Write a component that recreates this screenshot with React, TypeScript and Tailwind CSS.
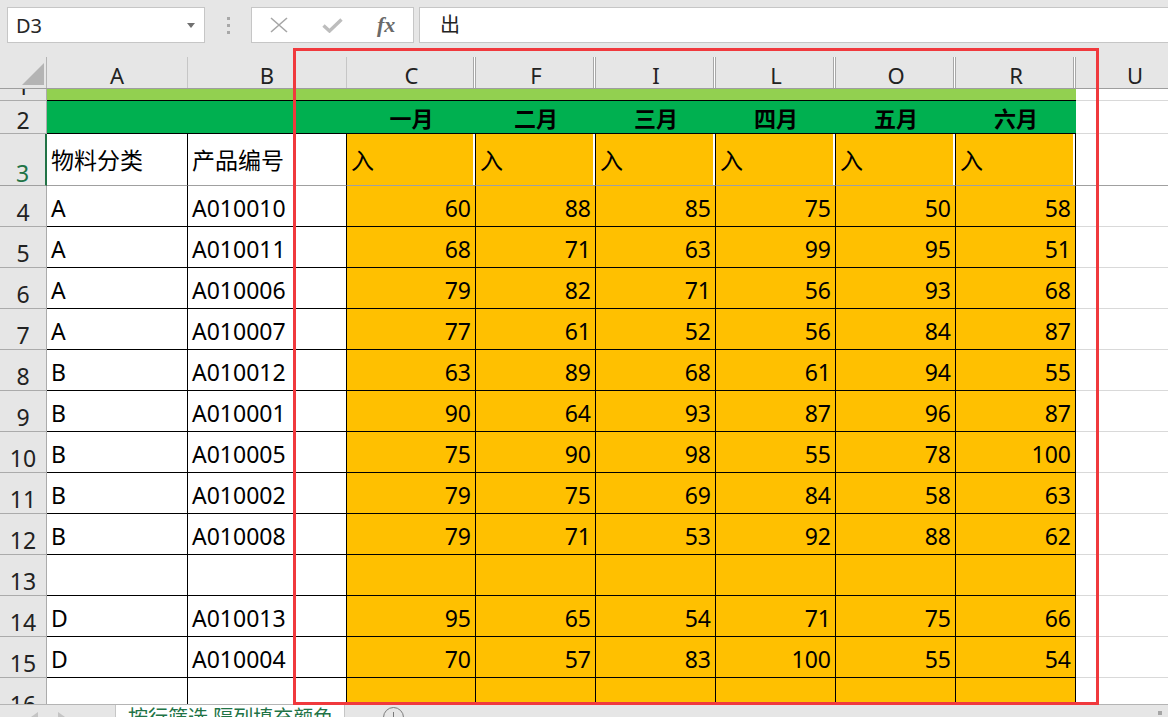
import clsx from 'clsx';

type DataRow = { n: number; a: string; b: string; v: number[] };

const monthCols = ['C', 'F', 'I', 'L', 'O', 'R'];
const months = ['一月', '二月', '三月', '四月', '五月', '六月'];

const data: DataRow[] = [
  { n: 4, a: 'A', b: 'A010010', v: [60, 88, 85, 75, 50, 58] },
  { n: 5, a: 'A', b: 'A010011', v: [68, 71, 63, 99, 95, 51] },
  { n: 6, a: 'A', b: 'A010006', v: [79, 82, 71, 56, 93, 68] },
  { n: 7, a: 'A', b: 'A010007', v: [77, 61, 52, 56, 84, 87] },
  { n: 8, a: 'B', b: 'A010012', v: [63, 89, 68, 61, 94, 55] },
  { n: 9, a: 'B', b: 'A010001', v: [90, 64, 93, 87, 96, 87] },
  { n: 10, a: 'B', b: 'A010005', v: [75, 90, 98, 55, 78, 100] },
  { n: 11, a: 'B', b: 'A010002', v: [79, 75, 69, 84, 58, 63] },
  { n: 12, a: 'B', b: 'A010008', v: [79, 71, 53, 92, 88, 62] },
  { n: 13, a: '', b: '', v: [] },
  { n: 14, a: 'D', b: 'A010013', v: [95, 65, 54, 71, 75, 66] },
  { n: 15, a: 'D', b: 'A010004', v: [70, 57, 83, 100, 55, 54] },
  { n: 16, a: '', b: '', v: [] },
];

const colW = (i: number) => (i === 0 ? 'w-[129px]' : 'w-[120px]');

const Toolbar = () => (
  <div className="flex h-[57px] shrink-0 items-start bg-[#e6e6e6] pl-[7px] pt-[7px]">
    <div className="flex h-[36px] w-[198px] items-center justify-between border border-[#c6c6c6] bg-white pl-[8px] pr-[9px] pt-[1px] text-[20px] text-[#262626]">
      <span>D3</span>
      <svg width="8" height="5" viewBox="0 0 8 5">
        <path d="M0 0h8L4 5z" fill="#707070" />
      </svg>
    </div>
    <div className="flex h-[36px] w-[46px] flex-col items-center justify-center gap-[4px]">
      <span className="h-[3px] w-[3px] bg-[#a8a8a8]" />
      <span className="h-[3px] w-[3px] bg-[#a8a8a8]" />
      <span className="h-[3px] w-[3px] bg-[#a8a8a8]" />
    </div>
    <div className="flex h-[36px] w-[163px] items-center border border-[#c6c6c6] bg-white">
      <svg className="ml-[18px]" width="18" height="16" viewBox="0 0 18 16">
        <path d="M1 1l16 14M17 1L1 15" stroke="#a6a6a6" strokeWidth="1.6" fill="none" />
      </svg>
      <svg className="ml-[34px]" width="21" height="15" viewBox="0 0 21 15">
        <path d="M1.5 7.5l6 5.5L19.5 1.5" stroke="#bdbdbd" strokeWidth="3.4" fill="none" />
      </svg>
      <span className="ml-[34px] font-['Liberation_Serif',serif] text-[22px] font-bold italic leading-none text-[#6a6a6a]">
        fx
      </span>
    </div>
    <div className="ml-[5px] flex h-[36px] flex-1 items-center border border-r-0 border-[#c6c6c6] bg-white pl-[20px] text-[20px] text-[#222]">
      出
    </div>
  </div>
);

const ColumnHeader = () => (
  <div className="flex h-[32px] shrink-0 border-b border-[#9e9e9e] bg-[#e6e6e6] text-[22px] leading-[28px] text-[#222]">
    <div className="w-[47px] shrink-0 border-r border-[#b4b4b4]">
      <svg width="46" height="31" viewBox="0 0 46 31">
        <path d="M22 28L44 6v22z" fill="#b4b4b4" />
      </svg>
    </div>
    <div className="flex w-[141px] shrink-0 items-center justify-center border-r border-[#c6c6c6] pt-[4px]">A</div>
    <div className="flex w-[159px] shrink-0 items-center justify-center border-r border-[#c6c6c6] pt-[4px]">B</div>
    {monthCols.map((c, i) => (
      <div
        key={c}
        className={clsx(
          colW(i),
          'flex shrink-0 items-center justify-center pt-[4px] shadow-[inset_-1px_0_0_#a8a8a8,inset_-2px_0_0_#ffffff,inset_-3px_0_0_#a8a8a8]'
        )}
      >
        {c}
      </div>
    ))}
    <div className="flex w-[118px] shrink-0 items-center justify-center pt-[4px]">U</div>
  </div>
);

const RowHead = ({ n, className }: { n: number; className?: string }) => (
  <div
    className={clsx(
      'flex w-[47px] shrink-0 items-end justify-center border-b border-r border-[#ababab] bg-[#e6e6e6] leading-[24px] text-[#222]',
      className
    )}
  >
    {n}
  </div>
);

const TopRows = () => (
  <>
    <div className="flex h-[12px] shrink-0">
      <RowHead n={1} className="overflow-hidden pb-0 leading-[28px]" />
      <div className="w-[1029px] shrink-0 border-b border-black bg-[#92d050]" />
      <div className="flex-1 border-b border-[#d9d9d9] bg-white" />
    </div>
    <div className="flex h-[33px] shrink-0">
      <RowHead n={2} className="pb-[1px] leading-[20px]" />
      <div className="w-[300px] shrink-0 border-b border-black bg-[#00b050]" />
      {months.map((m, i) => (
        <div
          key={m}
          className={clsx(colW(i), 'flex shrink-0 items-end justify-center border-b border-black bg-[#00b050] pb-[1px] text-[22px] font-bold leading-[28px] text-black')}
        >
          {m}
        </div>
      ))}
      <div className="flex-1 border-b border-[#d9d9d9] bg-white" />
    </div>
    <div className="flex h-[52px] shrink-0">
      <RowHead
        n={3}
        className="border-b-[#a0a0a0] border-r-2 border-r-[#217346] bg-[#d2d2d2] pb-0 text-[#217346]"
      />
      <div className="flex w-[141px] shrink-0 items-end border-b border-r border-b-[#a0a0a0] border-r-black bg-white pb-[11px] pl-[4px] leading-[28px]">
        物料分类
      </div>
      <div className="flex w-[159px] shrink-0 items-end border-b border-r border-b-[#a0a0a0] border-r-black bg-white pb-[11px] pl-[4px] leading-[28px]">
        产品编号
      </div>
      {monthCols.map((c, i) => (
        <div
          key={c}
          className={clsx(
            colW(i),
            'flex shrink-0 items-end border-b border-r border-b-[#a0a0a0] border-r-black bg-[#ffc000] pb-[11px] pl-[4px] leading-[28px] shadow-[inset_-2px_0_0_#ffffff]'
          )}
        >
          入
        </div>
      ))}
      <div className="flex-1 border-b border-[#a0a0a0] bg-white" />
    </div>
  </>
);

const DataRows = () => (
  <>
    {data.map((r) => (
      <div key={r.n} className="flex h-[41px] shrink-0">
        <RowHead n={r.n} className="pb-[2px]" />
        <div className="flex w-[141px] shrink-0 items-end border-b border-r border-black bg-white pb-[4px] pl-[4px] leading-[28px]">
          {r.a}
        </div>
        <div className="flex w-[159px] shrink-0 items-end border-b border-r border-black bg-white pb-[4px] pl-[4px] leading-[28px]">
          {r.b}
        </div>
        {monthCols.map((c, i) => (
          <div
            key={c}
            className={clsx(colW(i), 'flex shrink-0 items-end justify-end border-b border-r border-black bg-[#ffc000] pb-[4px] pr-[4px] leading-[28px]')}
          >
            {r.v[i] ?? ''}
          </div>
        ))}
        <div className="flex-1 border-b border-[#d9d9d9] bg-white" />
      </div>
    ))}
  </>
);

const SheetTabs = () => (
  <div className="flex h-[13px] shrink-0 items-start overflow-hidden border-t border-[#b4b4b4] bg-[#e6e6e6]">
    <div className="flex w-[115px] shrink-0 items-start pt-[7px]">
      <svg className="ml-[31px]" width="7" height="10" viewBox="0 0 7 10">
        <path d="M7 0v10L0 5z" fill="#c4c4c4" />
      </svg>
      <svg className="ml-[20px]" width="7" height="10" viewBox="0 0 7 10">
        <path d="M0 0v10l7-5z" fill="#c4c4c4" />
      </svg>
    </div>
    <div className="h-[30px] w-[230px] shrink-0 border-x border-[#c6c6c6] bg-white pl-[12px] text-[20px] leading-[26px] text-[#217346]">
      按行筛选 隔列填充颜色
    </div>
    <div className="ml-[38px] mt-[2px] flex h-[21px] w-[21px] shrink-0 items-start justify-center rounded-full border border-[#7a7a7a]">
      <span className="mt-[4px] h-[12px] w-[1px] bg-[#7a7a7a]" />
    </div>
    <span className="ml-auto mr-[6px] mt-[6px] h-[4px] w-[4px] shrink-0 bg-[#a6a6a6]" />
  </div>
);

export default function App() {
  return (
    <div className="relative flex h-[717px] w-[1168px] flex-col overflow-hidden bg-white font-['Noto_Sans','Noto_Sans_CJK_SC',sans-serif] text-[23px] text-black">
      <Toolbar />
      <div className="flex flex-1 flex-col overflow-hidden">
        <ColumnHeader />
        <TopRows />
        <DataRows />
      </div>
      <SheetTabs />
      <div className="pointer-events-none absolute left-[293px] top-[48px] h-[657px] w-[806px] border-[3px] border-[#f0393d]" />
    </div>
  );
}
